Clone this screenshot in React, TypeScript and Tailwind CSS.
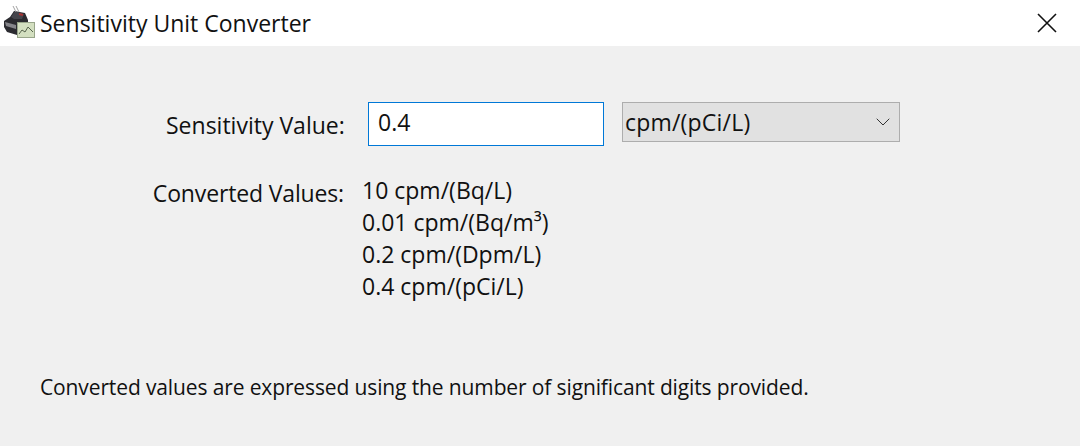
import { ChevronDown } from "lucide-react"

const converted = ["10 cpm/(Bq/L)", "0.01 cpm/(Bq/m³)", "0.2 cpm/(Dpm/L)", "0.4 cpm/(pCi/L)"]

const AppIcon = () => (
  <svg width="32" height="34" viewBox="0 0 32 34" className="shrink-0">
    <path d="M0 15 L6 11 L10 5 L21 7 L24 14 L24 24 L13 29 L3 26 L0 21 Z" fill="#2b2b30" />
    <path d="M7 11 L11 5 L20 8 L18 13 L10 13 Z" fill="#45454c" />
    <path d="M9 0 L12 6 M12 0 L15 6" stroke="#a3a3a3" strokeWidth="1" />
    <path d="M15 8 L19 9" stroke="#a83232" strokeWidth="2" />
    <path d="M1 16 L12 19 L12 23 L2 20 Z" fill="#85858a" />
    <rect x="13.5" y="16.5" width="17" height="15" fill="#d3dfc0" stroke="#98a58a" />
    <path d="M15 28 L18 24 L21 26 L24 21 L29 26" fill="none" stroke="#56634c" strokeWidth="1" />
  </svg>
)

export default function App() {
  return (
    <div className="flex h-[446px] w-[1080px] flex-col bg-[#f0f0f0] font-['Open_Sans',sans-serif] text-[#111]">
      <div className="flex h-[46px] items-center justify-between bg-white pl-[4px] pr-[23px]">
        <div className="flex items-center gap-[4px]">
          <AppIcon />
          <span className="text-[23px] leading-[32px]">Sensitivity Unit Converter</span>
        </div>
        <svg width="20" height="20" viewBox="0 0 20 20">
          <path d="M1 1 L19 19 M19 1 L1 19" stroke="#111" strokeWidth="1.6" fill="none" />
        </svg>
      </div>

      <div className="flex flex-1 flex-col px-10 pt-14">
        <div className="ml-[126px] flex items-start">
          <span className="w-[178px] whitespace-nowrap pt-[7px] text-right text-[23px] leading-[32px]">
            Sensitivity Value:
          </span>
          <div className="ml-6 flex h-[44px] w-[236px] items-start border border-[#0078d7] bg-white pl-[9px] pt-[3px] text-[23px] leading-[32px]">
            0.4
          </div>
          <div className="ml-[18px] flex h-[40px] w-[278px] items-center justify-between border border-[#adadad] bg-[#e1e1e1] pl-[2px] pr-[4px] text-[23px] tracking-[0.2px]">
            cpm/(pCi/L)
            <ChevronDown size={24} strokeWidth={1} className="text-[#333]" />
          </div>
        </div>

        <div className="ml-[73px] mt-[30px] flex items-start">
          <span className="w-[231px] whitespace-nowrap pt-[1px] text-right text-[23px] leading-[32px] tracking-[-0.15px]">
            Converted Values:
          </span>
          <div className="ml-[18px] -mt-[2px] flex flex-col text-[23px] leading-[32px]">
            {converted.map((value) => (
              <span key={value}>{value}</span>
            ))}
          </div>
        </div>

        <p className="mt-[69px] text-[21px] leading-[32px] tracking-[-0.125px]">
          Converted values are expressed using the number of significant digits provided.
        </p>
      </div>
    </div>
  )
}
